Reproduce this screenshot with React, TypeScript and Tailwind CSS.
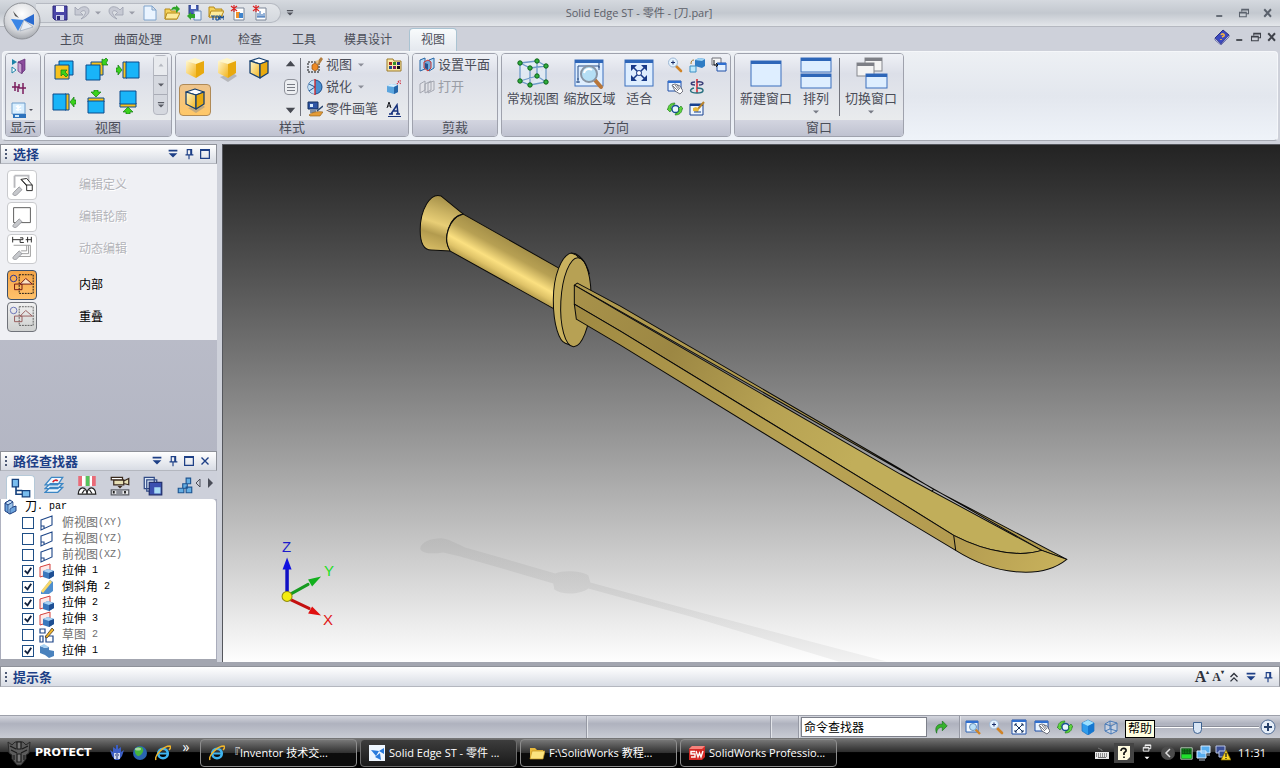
import type { ReactNode } from 'react';

type IconProps = { name: string; size?: number; className?: string };

/** Yellow or outlined shaded cube used by the view style gallery. */
function Cube({ edge, shadow }: { edge?: boolean; shadow?: boolean }) {
  const stroke = edge ? '#17406f' : 'none';
  return (
    <svg width="24" height="28" viewBox="0 0 24 28" className="block">
      <defs>
        <linearGradient id="cubeFront" x1="0" y1="0" x2="1" y2="1">
          <stop offset="0" stopColor="#fff7cf" />
          <stop offset="1" stopColor="#f3b41c" />
        </linearGradient>
      </defs>
      {shadow && <path d="M5 22l8 5 9-6-4-3z" fill="#8d8d8d" opacity=".5" />}
      <g stroke={stroke} strokeWidth="1.3" strokeLinejoin="round">
        <path d="M3 6l9-3 9 3-8 3z" fill={edge ? '#fdfdfd' : '#fff6c8'} />
        <path d="M3 6l10 3v14l-10-5z" fill="url(#cubeFront)" />
        <path d="M13 9l8-3v12l-8 5z" fill="#e8a90e" />
      </g>
    </svg>
  );
}

const blueSquare = { fill: '#19b4f8', stroke: '#0b4a8c' };

/** 24px drawings for the six named views: blue plate, gold back plate, green arrow. */
const viewIcons: ReactNode[] = [
  <>
    <path d="M7 3h14v14H7z" {...blueSquare} />
    <path d="M3 7h14v14H3z" fill="#f8c21c" stroke="#0b4a8c" />
    <path d="M9 12h6l-2 2 3 3-2 2-3-3-2 2z" fill="#3bd21c" stroke="#137a13" strokeWidth=".7" />
  </>,
  <>
    <path d="M7 4h12v13H7z" fill="#f8c21c" stroke="#0b4a8c" />
    <path d="M2 7h14v15H2z" {...blueSquare} />
    <path d="M18 7V1l2 1 2-2 2 2-2 3 2 2z" fill="#3bd21c" stroke="#137a13" strokeWidth=".7" />
  </>,
  <>
    <path d="M7 4h4v16H7z" fill="#f8c21c" stroke="#0b4a8c" />
    <path d="M10 4h13v16H10z" {...blueSquare} />
    <path d="M0 10h2V7l4 5-4 5v-3H0z" fill="#3bd21c" stroke="#137a13" strokeWidth=".7" />
  </>,
  <>
    <path d="M13 4h4v16h-4z" fill="#f8c21c" stroke="#0b4a8c" />
    <path d="M1 4h13v16H1z" {...blueSquare} />
    <path d="M24 10h-2V7l-4 5 4 5v-3h2z" fill="#3bd21c" stroke="#137a13" strokeWidth=".7" />
  </>,
  <>
    <path d="M4 8h16v4H4z" fill="#f8c21c" stroke="#0b4a8c" />
    <path d="M4 11h16v12H4z" {...blueSquare} />
    <path d="M10 0h4v2h3l-5 5-5-5h3z" fill="#3bd21c" stroke="#137a13" strokeWidth=".7" />
  </>,
  <>
    <path d="M4 13h16v4H4z" fill="#f8c21c" stroke="#0b4a8c" />
    <path d="M4 1h16v13H4z" {...blueSquare} />
    <path d="M10 24h4v-2h3l-5-5-5 5h3z" fill="#3bd21c" stroke="#137a13" strokeWidth=".7" />
  </>,
];

const magnifier = (
  <>
    <path d="M9 9l5 5" stroke="#d08428" strokeWidth="2.6" strokeLinecap="round" />
    <circle cx="6" cy="5.5" r="4.5" fill="#e4f3ff" stroke="#9db7d4" />
    <path d="M4 5.5h4M6 3.5v4" stroke="#1b2f6b" strokeWidth="1" />
  </>
);

const fitWindow = (
  <>
    <path d="M1 1h14v14H1z" fill="#f7fbff" stroke="#1f4fa6" />
    <path d="M1 1h14v2H1z" fill="#2f6fd0" />
    <path d="M4 5l8 8M12 5l-8 8M4 7V5h2M12 7V5h-2M4 11v2h2M12 11v2h-2" stroke="#15305f" fill="none" />
  </>
);

const panWindow = (
  <>
    <path d="M1 2h13v10H1z" fill="#e9f3ff" stroke="#1f4fa6" />
    <path d="M1 2h13v2H1z" fill="#2f6fd0" />
    <path d="M5 6l3 6 5 3 3-3-3-5-5-2z" fill="#fff" stroke="#3c3f4d" strokeWidth=".7" />
    <path d="M6 7l5 5M8 6l4 5M10 6l3 4" stroke="#3c3f4d" strokeWidth=".7" />
  </>
);

const rotate = (
  <>
    <circle cx="8.5" cy="8" r="3.6" fill="#e9f6ff" stroke="#174f94" strokeWidth="1.5" />
    <path d="M1 8c0-4 3-6 7-6l-1 2C4 4 4 6 4 8h1l-2 3-3-3zM15 8c0 4-3 6-7 6l1-2c3 0 3-2 3-4h-1l3-3 2 3z" fill="#5fd63f" stroke="#177217" strokeWidth=".6" />
  </>
);

const ieGlobe = (
  <>
    <circle cx="8" cy="8.5" r="4.8" fill="none" stroke="#3fb4ef" strokeWidth="2.6" />
    <path d="M4 8.5h9" stroke="#3fb4ef" strokeWidth="2" />
    <path d="M1 15C-1 11 8 1 15 1c1 1 0 3-1 4" fill="none" stroke="#f0b52a" strokeWidth="1.5" />
  </>
);

/** 16px drawings, keyed by what they stand for. */
const icons: Record<string, ReactNode> = {
  save: (
    <>
      <path d="M1 1h14v14H3l-2-2z" fill="#4a45a8" stroke="#2c2878" />
      <path d="M4 1h8v6H4z" fill="#f3f4fb" />
      <path d="M4 10h8v5H4z" fill="#c9cbe6" />
      <path d="M5 11h3v4H5z" fill="#2c2878" />
    </>
  ),
  undo: <path d="M1 2v8h8L6.5 7.5C9 4 13 6 11 9c-1 2-2 3-4 5 5-2 8-5 8-8C15 1 8 0 4 5z" fill="#c7cad4" stroke="#9da1ae" strokeWidth=".8" />,
  redo: <path d="M15 2v8H7l2.5-2.5C7 4 3 6 5 9c1 2 2 3 4 5-5-2-8-5-8-8C1 1 8 0 12 5z" fill="#c7cad4" stroke="#9da1ae" strokeWidth=".8" />,
  newDoc: <path d="M2 1h8l4 4v10H2zM10 1v4h4" fill="#eaf4ff" stroke="#7fa3cc" />,
  open: (
    <>
      <path d="M1 4h5l1 2h6v8H1z" fill="#f5d25a" stroke="#b58a1b" />
      <path d="M3 8h13l-3 6H1z" fill="#fdeb9c" stroke="#b58a1b" />
      <path d="M7 5c1-3 3-4 5-3V0l4 4-4 4V5c-2-1-3 0-5 0z" fill="#2fa52a" />
    </>
  ),
  saveAs: (
    <>
      <path d="M3 0h9v9H3z" fill="#4a62b8" stroke="#2b3c80" />
      <path d="M5 0h5v4H5z" fill="#eef2ff" />
      <path d="M8 6h7v9H8z" fill="#eaf4ff" stroke="#6b8ab5" />
      <path d="M1 11l4-4v2h4v4H5v2z" fill="#2fa52a" />
    </>
  ),
  tdm: (
    <>
      <path d="M1 2h5l1 2h7v8H1z" fill="#f5d25a" stroke="#b58a1b" />
      <path d="M3 6h13l-3 6H1z" fill="#fdeb9c" stroke="#b58a1b" />
      <path d="M3 11h4M5 11v4M8 15v-4h2l1 2-1 2H8M12 15v-4l2 2 2-2v4" fill="none" stroke="#174f94" strokeWidth="1.2" />
    </>
  ),
  newPart: (
    <>
      <path d="M4 3h10v12H4z" fill="#fff" stroke="#7b8597" />
      <path d="M6 7h4v6H6z" fill="#f0922a" />
      <path d="M9 8h4v5H9z" fill="#4084cc" />
      <path d="M4 0v7M1 1l6 5M7 1L1 6" stroke="#dc2727" strokeWidth="1.2" />
    </>
  ),
  newSheet: (
    <>
      <path d="M4 3h10v12H4z" fill="#fff" stroke="#7b8597" />
      <path d="M6 12V8M8 12V6M10 12V9M12 12V8M5 12h8" stroke="#2d66b0" />
      <path d="M4 0v7M1 1l6 5M7 1L1 6" stroke="#dc2727" strokeWidth="1.2" />
    </>
  ),
  planes: (
    <>
      <path d="M1 1l5 3-5 3z" fill="#1d83a8" />
      <path d="M1 9l4 3-4 3z" fill="#fff" stroke="#1d83a8" />
      <path d="M7 4l4 2v10l-4-3z" fill="#c9a3d2" stroke="#5f2c74" strokeWidth=".7" />
      <path d="M7 4l7-3v11l-3 3V6z" fill="#8d4d9d" stroke="#5f2c74" strokeWidth=".7" />
    </>
  ),
  axes: <path d="M4 2v9M1 7h6v5M12 3v11M8 8h7M8 4v4" fill="none" stroke="#7a1c5c" strokeWidth="1.5" />,
  display: (
    <>
      <path d="M1 1h13v11H1z" fill="#d9efff" stroke="#6f9dcb" />
      <path d="M5 4l5 4M10 4l-5 4M7 3v6" stroke="#fff" strokeWidth="1.5" />
      <path d="M2 12h13v4H2z" fill="#2d73bd" />
      <path d="M4 13h4v2H4z" fill="#cfe9fb" />
    </>
  ),
  paintView: (
    <>
      <path d="M1 5h11v10H1z" fill="none" stroke="#111" strokeDasharray="2 1" />
      <path d="M5 8l3-2 3 2v4l-3 2-3-2z" fill="#ee8a25" stroke="#8e4b0d" strokeWidth=".7" />
      <path d="M9 6l5-6 2 2-4 6z" fill="#b17d3e" />
      <path d="M8 4l4-1-1 4z" fill="#e8c48c" />
    </>
  ),
  sharpen: (
    <>
      <circle cx="8" cy="8" r="7" fill="#4b8fd0" stroke="#1c4f8f" />
      <path d="M8 1a7 7 0 0 0 0 14z" fill="#c5e1f6" />
      <path d="M2 5l6 3-6 4" stroke="#1c4f8f" fill="none" />
      <path d="M8 0v16" stroke="#d42020" strokeWidth="1.3" />
    </>
  ),
  painter: (
    <>
      <path d="M1 1h10v7H1z" fill="#2e55a5" stroke="#15305f" />
      <path d="M3 3h3v3H3z" fill="#d8ecff" />
      <path d="M3 8h6v4H3z" fill="#7d8fa7" />
      <path d="M2 14c3-3 8-4 14-3l-3 4H3z" fill="#e39b36" stroke="#8a5a16" strokeWidth=".6" />
      <path d="M10 10l6-5" stroke="#28456f" strokeWidth="1.5" />
    </>
  ),
  palette: (
    <>
      <path d="M1 2h6l1 2h7v10H1z" fill="#fbe8a8" stroke="#9b7a28" />
      <path d="M3 5h3v3H3z" fill="#a3271f" />
      <path d="M7 5h3v3H7z" fill="#2f8f2a" />
      <path d="M11 5h3v3h-3z" fill="#23277f" />
      <path d="M3 9h3v3H3z" fill="#1c4f8f" />
      <path d="M7 9h3v3H7z" fill="#7a1c5c" />
      <path d="M11 9h3v3h-3z" fill="#111" />
    </>
  ),
  cubeSpark: (
    <>
      <path d="M1 7l4-2 7 1v7l-4 2-7-2z" fill="#5aa5de" />
      <path d="M1 7l4-2 7 1-4 2z" fill="#d9f0ff" />
      <path d="M8 8l4-2v7l-4 2z" fill="#2666a8" />
      <path d="M11 5l4-4M12 2l1 1M14 4l1 1" stroke="#cf2b3d" strokeDasharray="1 1" strokeWidth="1.3" />
    </>
  ),
  fontStyle: (
    <>
      <path d="M1 7l2-6 2 6M2 5h3" fill="none" stroke="#15181f" />
      <path d="M5 13l6-9 1 9M7 10h5M3 13h4M10 13h4" fill="none" stroke="#17327c" strokeWidth="1.5" />
      <path d="M2 15.5h13" stroke="#17327c" />
    </>
  ),
  clipPlane: (
    <>
      <path d="M1 3l5-2v11l-5 2zM10 3l5-2v10l-5 3z" fill="#bcdcf5" stroke="#2464a4" />
      <path d="M5 5l4-2 3 2v6l-3 3-4-3z" fill="#6fa8d8" stroke="#cf3430" />
      <path d="M6 6l3 1v6l-3-2z" fill="#24528f" />
    </>
  ),
  clipOff: <path d="M1 5l5-3v9l-5 3zM6 5l6-3v9l-6 3zM9 4l6-2v9l-6 3z" fill="#e2e3e8" stroke="#a3a6b0" />,
  magnifier,
  fitWindow,
  panWindow,
  rotate,
  zoomArea: (
    <>
      <path d="M1 2h12v11H1z" fill="#f3f9ff" stroke="#2e65b4" />
      <path d="M1 2h12v2H1z" fill="#2f6fd0" />
      <path d="M10 10l5 5" stroke="#d08428" strokeWidth="2.4" />
      <circle cx="8" cy="8" r="3.5" fill="#b9e0f8" stroke="#6f93b7" />
    </>
  ),
  viewFace: (
    <>
      <path d="M6 3l4-2 6 1v7l-3 2-7-2z" fill="#2f7cc4" />
      <path d="M6 3l4-2 6 1-3 2z" fill="#9fd3f4" />
      <path d="M1 9h6v6H1z" fill="#bfe9fb" stroke="#3b8fc4" />
      <path d="M2 7c0-3 1-4 3-4" fill="none" stroke="#a37a2f" />
    </>
  ),
  spin: (
    <>
      <path d="M8 0v14" stroke="#d4202a" strokeWidth="1.5" />
      <path d="M8 3c7-1 8 3 2 3M6 6C1 6 1 3 6 3" fill="none" stroke="#3a3f78" strokeWidth="1.5" />
      <path d="M8 9c8 0 8 5 0 5s-8-4-3-5" fill="none" stroke="#28707f" strokeWidth="1.5" />
    </>
  ),
  prevView: (
    <>
      <path d="M1 1h9v7H1z" fill="#f5f5f5" stroke="#6f7078" />
      <path d="M6 6h9v8H6z" fill="#e4f1ff" stroke="#1f4fa6" />
      <path d="M6 6h9v2H6z" fill="#2f6fd0" />
      <path d="M3 3v5h4M5 6l2 2-2 2" fill="none" stroke="#15181f" />
    </>
  ),
  sketchView: (
    <>
      <path d="M1 3h13v11H1z" fill="#eef6ff" stroke="#17408f" />
      <path d="M1 3h13v2H1z" fill="#17408f" />
      <path d="M8 9l7-8" fill="none" stroke="#b8832c" strokeWidth="2" />
      <path d="M4 7l3-1 3 2-1 3-5-1z" fill="#e8b93c" />
      <path d="M5 11h7" stroke="#17408f" />
    </>
  ),
  greenArrow: <path d="M2 15c-3-7 1-12 7-11V0l6 6-6 6V8c-3-1-7 2-7 7z" fill="#35b22c" stroke="#15701a" strokeWidth=".8" />,
  shaded: (
    <>
      <path d="M2 4l6-3 6 3v8l-6 4-6-4z" fill="#2f9cec" stroke="#1c70bd" strokeWidth=".7" />
      <path d="M2 4l6-3 6 3-6 3z" fill="#9be0ff" />
      <path d="M8 7l6-3v8l-6 4z" fill="#1576cf" />
    </>
  ),
  wireframe: <path d="M2 5l5-3 7 2v8l-6 3-6-3zM2 5l6 2 6-3M8 7v8M7 2v8l-5 2M7 10l7 2" fill="#d7e8fa" fillOpacity=".5" stroke="#3f74b4" strokeWidth=".9" />,
  book: (
    <>
      <path d="M1 9l8-8 6 5-8 9z" fill="#3c49bf" stroke="#2a2f86" />
      <path d="M1 9v2l6 5 8-8V6l-8 9z" fill="#d7daf2" stroke="#2a2f86" strokeWidth=".6" />
      <path d="M7 6c1-2 4-1 3 1L8 8M7 10v1" fill="none" stroke="#f5b443" strokeWidth="1.6" />
    </>
  ),
  // path finder tabs
  tree: (
    <>
      <path d="M1 1h5v6H1zM9 10h6v5H9z" fill="#79bdee" stroke="#16427e" />
      <path d="M4 7v6h5M4 10h5" fill="none" stroke="#16427e" strokeWidth="1.3" />
    </>
  ),
  layers: (
    <>
      <path d="M1 13l4-4h10l-4 4zM1 10l4-4h10l-4 4zM1 7l5-6h9l-4 6z" fill="#eef7ff" stroke="#3c86c4" />
      <path d="M7 5c1-2 3-2 4-1" fill="none" stroke="#d4202a" strokeWidth="1.3" />
    </>
  ),
  sensors: (
    <>
      <path d="M1 0h14v8H1z" fill="#e96b78" />
      <path d="M4 0h3v8H4zM10 0h2v8h-2z" fill="#fff" />
      <path d="M7 0h3v8H7z" fill="#55c45d" />
      <path d="M1 14.5a3.500 5 0 0 1 7 0zM8 14.5a3.500 5 0 0 1 7 0z" fill="#fff" stroke="#222" />
      <path d="M4 14l2-3M12 14l-2-3" stroke="#222" />
    </>
  ),
  playback: (
    <>
      <path d="M3 3h8v4H3zM11 4l4-2v5l-4-1" fill="#e6dfb5" stroke="#3a2a1e" />
      <path d="M1 1h9v2H1z" fill="#fff" stroke="#3a2a1e" />
      <path d="M1 11h14v4H1z" fill="#e7e8ea" stroke="#5c5f66" />
      <path d="M5 11h5v4H5z" fill="#8d9099" />
      <path d="M3 12v2M12 12v2" stroke="#222" strokeWidth="1.5" />
      <path d="M6 8l2 2 2-2" fill="#3a2a1e" />
    </>
  ),
  library: (
    <>
      <path d="M1 1h8v9H1zM3 3h8v9H3z" fill="#dbe7f5" stroke="#314a86" />
      <path d="M5 5h10v10H5z" fill="#3b51b0" stroke="#22306e" />
      <path d="M9 9h5v5H9z" fill="#a8dcf5" />
    </>
  ),
  family: <path d="M9 1h4v5H9zM6 6h4v4H6zM2 10h5v4H2zM9 9h5v5H9z" fill="#63aee4" stroke="#1c5390" />,
  // tree rows
  part: (
    <>
      <path d="M2 4l5-3v8l6-2v5l-6 3-5-3z" fill="#6ca3dc" stroke="#1e3f80" />
      <path d="M2 4l5-3 3 2-5 3z" fill="#c4def6" stroke="#1e3f80" />
      <path d="M5 6l5-3v5l-3 2v5l-2-1z" fill="#9cc4ea" stroke="#1e3f80" strokeWidth=".7" />
    </>
  ),
  refPlane: <path d="M2 5l11-4v9l-11 5zM2 11h3v3" fill="none" stroke="#1c4587" strokeWidth="1.1" />,
  extrude: (
    <>
      <path d="M1 4l10-3v10L1 14z" fill="#fde9e8" stroke="#d5413c" />
      <path d="M4 8l5-2 6 2v5l-5 3-6-2z" fill="#3a78bd" />
      <path d="M4 8l5-2 6 2-5 2z" fill="#a9d2f3" />
      <path d="M10 10l5-2v5l-5 3z" fill="#1f4f93" />
    </>
  ),
  chamfer: (
    <>
      <path d="M2 13L11 1l3 2v9l-4 3H2z" fill="#4f8fce" />
      <path d="M2 12L11 1l2 2-9 11z" fill="#f7d76a" />
    </>
  ),
  sketch: (
    <>
      <path d="M1 2h5v4H1zM1 9h3v6H1zM7 9h7v6H7z" fill="none" stroke="#1c4587" strokeWidth="1.2" />
      <path d="M6 10l7-9 2 2-7 8z" fill="#f0b52a" stroke="#3a2a1e" strokeWidth=".7" />
    </>
  ),
  base: (
    <>
      <path d="M1 3l5 2v7l-5-2zM6 5l4-1v3l5 1v5l-5 2-4-3z" fill="#4a82bd" />
      <path d="M1 3l4-2 5 3-4 1z" fill="#a9d2f3" />
    </>
  ),
  // taskbar
  ieGlobe,
  robot: (
    <>
      <path d="M1 5l2 6 3 4h4l3-4 2-6-3 2V2L9 4V0H7v4L4 2v5z" fill="#3c5fc4" />
      <path d="M5 8h6v6H5z" fill="#cfd9f2" />
      <path d="M6 10h1M9 10h1M8 8v6" stroke="#23336f" />
    </>
  ),
  globe: (
    <>
      <circle cx="8" cy="8" r="7" fill="#2a64b0" />
      <path d="M3 4c3-3 7-3 8 0s-2 6-4 7-5-3-4-7z" fill="#46b43c" />
      <ellipse cx="6" cy="4" rx="3" ry="1.5" fill="#fff" opacity=".5" />
    </>
  ),
  solidEdge: (
    <>
      <path d="M0 0h16v16H0z" fill="#eef6ff" />
      <path d="M2 5l8 1-3 5zM10 6l5-3v6zM6 12l5-4 1 7z" fill="#2a7bdc" />
    </>
  ),
  folder: (
    <>
      <path d="M1 3h5l2 2h6v9H1z" fill="#e9b93b" />
      <path d="M3 6h13l-2 8H1z" fill="#fbe37e" stroke="#c4921e" strokeWidth=".7" />
    </>
  ),
  solidWorks: (
    <>
      <path d="M0 4l3-3h13v11l-3 3H0z" fill="#d32a26" />
      <path d="M0 4l3-3h13l-3 3z" fill="#f5837c" />
      <path d="M6 6.500H2v2.500h4v3H2M7 6l2 6 1.500-4 1.500 4L14 6" fill="none" stroke="#fff" strokeWidth="1.4" />
    </>
  ),
  keyboard: (
    <>
      <path d="M1 7h14v7H1z" fill="#e8e8e8" />
      <path d="M2 9h12M2 11h12" stroke="#333" strokeDasharray="1 1" />
      <path d="M4 12.5h8" stroke="#777" />
      <path d="M8 6V5l-4-2" stroke="#777" fill="none" />
    </>
  ),
  helpPage: (
    <>
      <path d="M2 1h12v11l-3 3H2z" fill="#fffbe0" />
      <path d="M5 6c0-4 6-3 5 0L8 8v2M8 11.5v1.5" fill="none" stroke="#111" strokeWidth="1.7" />
    </>
  ),
  cpu: (
    <>
      <path d="M1 1h14v14H1z" fill="#0b4f12" stroke="#d5e8d5" />
      <path d="M2 9h12v5H2z" fill="#21e02d" />
      <path d="M2 3h12M2 5h12M2 7h12" stroke="#17a520" strokeDasharray="1 1" />
    </>
  ),
  network: (
    <>
      <path d="M5 1h9v7H5zM1 6h9v7H1z" fill="#58aef0" stroke="#d7ebff" />
      <path d="M3 15h6M11 10h3" stroke="#b7c5d6" />
    </>
  ),
  networkWarn: (
    <>
      <path d="M1 1h9v7H1z" fill="#3b4f96" stroke="#b9c4e3" />
      <path d="M4 6h7v6H4z" fill="#33488c" stroke="#b9c4e3" />
      <path d="M11 5l5 10H6z" fill="#fbd622" stroke="#7c6400" strokeWidth=".7" />
      <path d="M11 8v4M11 13v1" stroke="#222" strokeWidth="1.3" />
    </>
  ),
  // window decorations
  minimize: <path d="M3 12h8" stroke="currentColor" strokeWidth="2.4" />,
  restore: <path d="M5 6V3h9v6h-3M2 7h9v6H2zM2 8h9M5 4h9" fill="none" stroke="currentColor" strokeWidth="1.4" />,
  close: <path d="M3 3l9 10M12 3L3 13" stroke="currentColor" strokeWidth="2.6" />,
  closeThin: <path d="M4 4l8 8M12 4l-8 8" stroke="currentColor" strokeWidth="1.6" />,
  menu: <path d="M3 3h10v2H3zM3 7h10l-5 5z" fill="currentColor" />,
  pin: <path d="M6 3h5v6H6zM4 9h9M8 9v5M10 3v6" fill="none" stroke="currentColor" strokeWidth="1.3" />,
  maximize: <path d="M3 3h10v10H3zM3 4h10" fill="none" stroke="currentColor" strokeWidth="1.4" />,
  chevrons: <path d="M4 8l4-4 4 4M4 13l4-4 4 4" fill="none" stroke="currentColor" strokeWidth="1.6" />,
  down: <path d="M4 6h8l-4 4z" fill="currentColor" />,
  up: <path d="M3 11h10L8 5z" fill="currentColor" />,
};

function Icon({ name, size = 16, className }: IconProps) {
  return (
    <svg width={size} height={size} viewBox="0 0 16 16" aria-hidden="true" className={`block shrink-0 ${className ?? ''}`}>
      {icons[name]}
    </svg>
  );
}

function IconButton({ name, label, size, className }: IconProps & { label: string }) {
  return (
    <button type="button" aria-label={label} className={`flex items-center justify-center ${className ?? ''}`}>
      <Icon name={name} size={size} />
    </button>
  );
}

function TitleBar() {
  return (
    <header className="grid h-[26px] grid-cols-[1fr_auto_1fr] items-center bg-linear-to-b from-[#d5d9df] via-[#c3c8cf] to-[#e3e6ea] pr-[2px]">
      <div className="flex items-center">
        <div className="ml-9 flex h-5 w-[245px] items-center rounded-r-full border border-l-0 border-[#b6bac2] bg-linear-to-b from-[#e3e6ea] to-[#d4d8de] pl-4 text-[#9a9da8]">
          <IconButton name="save" label="保存" className="w-4" />
          <IconButton name="undo" label="撤销" className="ml-1 w-5" />
          <Icon name="down" size={12} />
          <IconButton name="redo" label="重做" className="ml-[2px] w-5" />
          <Icon name="down" size={12} />
          <div className="ml-1 flex gap-[6px]">
            <IconButton name="newDoc" label="新建" />
            <IconButton name="open" label="打开" />
            <IconButton name="saveAs" label="另存为" />
            <IconButton name="tdm" label="TDM" />
            <IconButton name="newPart" label="新建零件" />
            <IconButton name="newSheet" label="新建钣金" />
          </div>
        </div>
        <IconButton name="menu" label="自定义" size={10} className="ml-1 text-[#50535c]" />
      </div>
      <h1 className="text-[11px] text-[#5c6069]">Solid Edge ST - 零件 - [刀.par]</h1>
      <div className="flex justify-end gap-3 text-[#5b626d]">
        <IconButton name="minimize" label="最小化" size={12} />
        <IconButton name="restore" label="还原" size={12} />
        <IconButton name="close" label="关闭" size={12} className="mr-1" />
      </div>
    </header>
  );
}

function RibbonTabs() {
  const tabs = [
    { label: '主页', width: 'w-12' },
    { label: '曲面处理', width: 'w-[84px]' },
    { label: 'PMI', width: 'w-[42px]' },
    { label: '检查', width: 'w-[56px]' },
    { label: '工具', width: 'w-[52px]' },
    { label: '模具设计', width: 'w-[76px]' },
  ];
  return (
    <nav className="flex h-[25px] items-end border-t border-[#b5b8c0] bg-[#ced1da] pl-12 text-xs text-[#4a4d58]">
      {tabs.map((tab) => (
        <a key={tab.label} href="#" className={`${tab.width} pb-[3px] text-center`}>
          {tab.label}
        </a>
      ))}
      <a href="#" className="ml-[3px] h-[23px] w-12 rounded-t border border-b-0 border-[#a9c3d2] bg-linear-to-b from-[#f8fbfc] to-[#e4e8ee] pt-[3px] text-center">
        视图
      </a>
      <div className="ml-auto flex items-center gap-1 pr-[2px] pb-[6px] text-[#3f424a]">
        <IconButton name="book" label="帮助主题" />
        <IconButton name="minimize" label="最小化文档" size={12} />
        <IconButton name="restore" label="还原文档" size={12} />
        <IconButton name="close" label="关闭文档" size={12} />
      </div>
    </nav>
  );
}

function RibbonGroup({ title, className, children }: { title: string; className: string; children: ReactNode }) {
  return (
    <section className={`flex shrink-0 flex-col overflow-hidden rounded border border-[#9fa2ad] bg-linear-to-b from-[#f1f3f7] via-[#e1e4ea] to-[#eaebef] ${className}`}>
      <div className="flex h-[67px] bg-linear-to-b from-[#eff1f6] via-[#dcdfe8] via-30% to-[#e9ebed]">{children}</div>
      <h2 className="h-4 bg-linear-to-b from-[#d3d5e0] to-[#bfc2d0] text-center leading-[14px]">{title}</h2>
    </section>
  );
}

function SmallCommand({ icon, label, menu, disabled }: { icon: string; label: string; menu?: boolean; disabled?: boolean }) {
  return (
    <button type="button" disabled={disabled} className={`flex h-[22px] items-center gap-[3px] ${disabled ? 'text-[#9a9da6]' : ''}`}>
      <Icon name={icon} />
      <span>{label}</span>
      {menu && <Icon name="down" size={12} className="text-[#8b8e98]" />}
    </button>
  );
}

function BigCommand({ label, className, menu, children }: { label: string; className: string; menu?: boolean; children: ReactNode }) {
  return (
    <button type="button" className={`flex flex-col items-center whitespace-nowrap ${className}`}>
      <svg width="36" height="36" viewBox="0 0 36 36" className="block">
        {children}
      </svg>
      <span className="leading-4">{label}</span>
      {menu && <Icon name="down" size={12} className="text-[#777a85]" />}
    </button>
  );
}

/** Window glyph with a blue caption strip, drawn on a 36px canvas. */
function Pane({ x, y, w, h, gray }: { x: number; y: number; w: number; h: number; gray?: boolean }) {
  return (
    <>
      <rect x={x} y={y} width={w} height={h} fill={gray ? '#f4f4f4' : '#deeeff'} stroke={gray ? '#85878d' : '#3a6fbd'} />
      <rect x={x} y={y} width={w} height="3" fill={gray ? '#7d7f86' : '#2e66b8'} />
    </>
  );
}

function ScrollArrows() {
  return (
    <div className="flex w-[15px] flex-col items-center justify-between py-[2px] text-[#474a52]">
      <IconButton name="up" label="向上" size={15} />
      <span className="flex h-4 w-[14px] flex-col justify-center gap-[2px] rounded-sm border border-[#8f929b] bg-[#eceef1] px-[2px]">
        <i className="h-px bg-[#777a83]" />
        <i className="h-px bg-[#777a83]" />
        <i className="h-px bg-[#777a83]" />
      </span>
      <IconButton name="up" label="向下" size={15} className="rotate-180" />
    </div>
  );
}

function Ribbon() {
  const viewNames = ['前视图', '后视图', '左视图', '右视图', '俯视图', '仰视图'];
  return (
    <div className="mx-[2px] flex h-[90px] gap-[3px] rounded border border-[#f5f7fa] border-b-[#a6a9b2] bg-linear-to-b from-[#edf0f4] via-[#e3e7ee] to-[#eff3f9] px-[2px] pt-px pb-[3px] text-[13px] text-[#4a4d58]">
      <RibbonGroup title="显示" className="w-9">
        <div className="flex flex-col items-start gap-[6px] pt-1 pl-[5px]">
          <IconButton name="planes" label="参考平面" />
          <IconButton name="axes" label="坐标系" />
          <button type="button" aria-label="构造显示" className="flex items-center">
            <Icon name="display" />
            <Icon name="down" size={8} />
          </button>
        </div>
      </RibbonGroup>

      <RibbonGroup title="视图" className="w-32">
        <div className="grid grid-cols-[32px_32px_32px] grid-rows-[32px_32px] pl-[3px]">
          {viewIcons.map((drawing, i) => (
            <button key={viewNames[i]} type="button" aria-label={viewNames[i]} className="flex items-center justify-center">
              <svg width="24" height="24" viewBox="0 0 24 24">
                {drawing}
              </svg>
            </button>
          ))}
        </div>
        <div className="mt-px ml-auto mr-[3px] flex h-[60px] w-[15px] flex-col rounded-sm border border-[#b4b7c0] bg-[#d5d8df] text-[#5a5d66]">
          <IconButton name="up" label="上一行" size={8} className="flex-1 bg-[#e8eaee] text-[#b6b9c1]" />
          <IconButton name="down" label="下一行" size={12} className="flex-1 border-y border-[#a9acb6]" />
          <IconButton name="menu" label="更多" size={10} className="flex-1" />
        </div>
      </RibbonGroup>

      <RibbonGroup title="样式" className="w-[234px]">
        <div className="grid grid-cols-[32px_32px_32px] grid-rows-[30px_32px] pl-[3px]">
          <button type="button" aria-label="着色" className="flex items-center justify-center"><Cube /></button>
          <button type="button" aria-label="带阴影着色" className="flex items-center justify-center"><Cube shadow /></button>
          <button type="button" aria-label="带边着色" className="flex items-center justify-center"><Cube edge /></button>
          <button type="button" aria-label="带边和阴影着色" className="flex items-center justify-center rounded-sm border border-[#b08a56] bg-linear-to-b from-[#edc48d] to-[#ffc766]">
            <Cube edge shadow />
          </button>
        </div>
        <div className="ml-2 flex">
          <ScrollArrows />
          <div className="my-1 ml-[2px] w-px bg-[#71747e]" />
        </div>
        <div className="ml-[6px] w-[76px]">
          <SmallCommand icon="paintView" label="视图" menu />
          <SmallCommand icon="sharpen" label="锐化" menu />
          <SmallCommand icon="painter" label="零件画笔" />
        </div>
        <div className="ml-[3px] flex flex-col">
          <IconButton name="palette" label="颜色管理器" className="h-[22px]" />
          <IconButton name="cubeSpark" label="渲染" className="h-[22px]" />
          <IconButton name="fontStyle" label="文字样式" className="h-[22px]" />
        </div>
      </RibbonGroup>

      <RibbonGroup title="剪裁" className="w-[86px]">
        <div className="pl-[6px]">
          <SmallCommand icon="clipPlane" label="设置平面" />
          <SmallCommand icon="clipOff" label="打开" disabled />
        </div>
      </RibbonGroup>

      <RibbonGroup title="方向" className="w-[230px]">
        <BigCommand label="常规视图" className="ml-1 w-[54px]">
          <path d="M5 9l10 5v17L5 27zM5 9l17-2 9 5-16 2M15 31l16-3V12M22 7v15l9 6M22 22L5 27" fill="#e2f1fb" fillOpacity=".5" stroke="#6f9bc9" strokeWidth="1.3" />
          {[[5, 9], [22, 7], [31, 12], [15, 14], [5, 27], [15, 31], [31, 28], [22, 22]].map(([cx, cy]) => (
            <circle key={`${cx}-${cy}`} cx={cx} cy={cy} r="2.2" fill="#2fae3c" stroke="#0e6418" />
          ))}
        </BigCommand>
        <BigCommand label="缩放区域" className="ml-[3px] w-[54px]">
          <Pane x={4} y={6} w={28} h={26} />
          <path d="M7 26V12h21v4M7 24v5M5 28h4M28 9v5" fill="none" stroke="#284c85" />
          <path d="M23 25l7 8" stroke="#b8763a" strokeWidth="4" strokeLinecap="round" />
          <circle cx="18" cy="20" r="8" fill="#b5dff5" stroke="#8894a3" strokeWidth="2" />
          <path d="M13 19c1-4 5-5 8-3" fill="none" stroke="#fff" strokeWidth="2" />
        </BigCommand>
        <BigCommand label="适合" className="w-[46px]">
          <Pane x={4} y={6} w={28} h={26} />
          <path d="M12 13l12 12M24 13L12 25" fill="none" stroke="#183a88" strokeWidth="1.5" />
          <path d="M10 11h6l-6 6zM26 11h-6l6 6zM10 27h6l-6-6zM26 27h-6l6-6z" fill="#183a88" />
          <circle cx="18" cy="19" r="2.5" fill="#fff" stroke="#183a88" />
        </BigCommand>
        <div className="ml-[2px] grid grid-cols-[22px_22px_22px] grid-rows-[22px_22px_22px]">
          <IconButton name="magnifier" label="缩放" />
          <IconButton name="viewFace" label="观察面" />
          <IconButton name="prevView" label="上一视图" />
          <IconButton name="panWindow" label="平移" />
          <IconButton name="spin" label="自旋" />
          <span />
          <IconButton name="rotate" label="旋转" />
          <IconButton name="sketchView" label="草图视图" />
        </div>
      </RibbonGroup>

      <RibbonGroup title="窗口" className="w-[170px]">
        <BigCommand label="新建窗口" className="ml-1 w-[54px]">
          <Pane x={3} y={7} w={30} h={25} />
        </BigCommand>
        <BigCommand label="排列" className="w-[46px]" menu>
          <Pane x={3} y={4} w={30} h={14} />
          <Pane x={3} y={20} w={30} h={14} />
        </BigCommand>
        <div className="my-1 w-px bg-[#71747e]" />
        <BigCommand label="切换窗口" className="ml-1 w-[54px]" menu>
          <Pane x={12} y={4} w={17} h={13} gray />
          <Pane x={4} y={9} w={17} h={13} gray />
          <Pane x={13} y={20} w={21} h={14} />
        </BigCommand>
      </RibbonGroup>
    </div>
  );
}

function Grip() {
  return (
    <span className="flex flex-col gap-[2px]">
      <i className="size-[2px] bg-[#4d5a75]" />
      <i className="size-[2px] bg-[#4d5a75]" />
      <i className="size-[2px] bg-[#4d5a75]" />
    </span>
  );
}

function PanelHeader({ title, closable }: { title: string; closable?: boolean }) {
  return (
    <div className="flex h-5 items-center border border-[#8e9199] border-b-[#b4b7bf] bg-linear-to-b from-white to-[#d8dce4] pl-1 text-[#1d3f86]">
      <Grip />
      <h2 className="ml-[6px] text-[13px] font-bold leading-4">{title}</h2>
      <div className="mr-1 ml-auto flex gap-[2px]">
        <IconButton name="menu" label="选项" size={14} />
        <IconButton name="pin" label="固定" size={14} />
        <IconButton name="maximize" label="最大化" size={14} />
        {closable && <IconButton name="closeThin" label="关闭面板" size={14} />}
      </div>
    </div>
  );
}

const pencil = <path d="M6 23l6-6 3 3-6 6c-3 1-5-1-3-3z" fill="#c6c8cc" stroke="#8a8c91" strokeWidth=".8" />;

function SelectDrawing({ faded }: { faded?: boolean }) {
  return (
    <g fill="none" opacity={faded ? 0.65 : 1}>
      <path d="M12 4h15v20H12z" stroke="#111" strokeDasharray="2 1" />
      <circle cx="6" cy="8" r="3.5" stroke="#22329b" />
      <path d="M7 14h8v6H7z" stroke="#6d1010" />
      <path d="M13 14l6-6 7 6z" fill={faded ? 'none' : '#fbe3c4'} stroke="#6d1010" />
    </g>
  );
}

function SelectPanel() {
  const rows = [
    { label: '编辑定义', drawing: <><path d="M7 5h15v10M7 5v13" fill="none" stroke="#b8b9bd" strokeWidth="2" /><path d="M14 9l6-1 6 7v6h-6v-6zM14 9l6 7M20 15h6" fill="#fff" stroke="#222" />{pencil}</> },
    { label: '编辑轮廓', drawing: <><path d="M6 5h18v16H6z" fill="#fff" stroke="#555" />{pencil}</> },
    { label: '动态编辑', drawing: <><path d="M5 5h8M19 5h6M5 2v6M21 2v6M25 2v6M13 3h3v2h-3v3h4" fill="none" stroke="#222" /><path d="M6 11h18v12H10M22 11v9H12M20 11v6h-6" fill="none" stroke="#999" />{pencil}</> },
  ];
  const toggles = [
    { label: '内部', pressed: true },
    { label: '重叠', pressed: false },
  ];
  return (
    <section>
      <PanelHeader title="选择" />
      <div className="flex h-[176px] flex-col gap-[2px] bg-[#eff0f4] pt-[6px] pl-[7px] text-xs">
        {rows.map((row) => (
          <button key={row.label} type="button" disabled className="flex items-center text-[#b3b4b9] [text-shadow:1px_1px_0_white]">
            <svg width="30" height="30" viewBox="0 0 30 30" className="rounded-sm border border-[#c9cacd] bg-white">
              {row.drawing}
            </svg>
            <span className="ml-[42px]">{row.label}</span>
          </button>
        ))}
        <div className="mt-1 flex flex-col gap-[2px]">
          {toggles.map((toggle) => (
            <button key={toggle.label} type="button" aria-pressed={toggle.pressed} className="flex items-center text-black">
              <svg
                width="30"
                height="30"
                viewBox="0 0 30 30"
                className={`rounded-sm border ${toggle.pressed ? 'border-[#3c4f6a] bg-linear-to-b from-[#f5a547] to-[#ffc26b]' : 'border-[#70737a] bg-linear-to-b from-[#f0f0f0] to-[#cfd1d0]'}`}
              >
                <SelectDrawing faded={!toggle.pressed} />
              </svg>
              <span className="ml-[42px]">{toggle.label}</span>
            </button>
          ))}
        </div>
      </div>
    </section>
  );
}

interface Feature {
  name: string;
  suffix: string;
  icon: string;
  shown: boolean;
}

const features: Feature[] = [
  { name: '俯视图', suffix: '(XY)', icon: 'refPlane', shown: false },
  { name: '右视图', suffix: '(YZ)', icon: 'refPlane', shown: false },
  { name: '前视图', suffix: '(XZ)', icon: 'refPlane', shown: false },
  { name: '拉伸', suffix: ' 1', icon: 'extrude', shown: true },
  { name: '倒斜角', suffix: ' 2', icon: 'chamfer', shown: true },
  { name: '拉伸', suffix: ' 2', icon: 'extrude', shown: true },
  { name: '拉伸', suffix: ' 3', icon: 'extrude', shown: true },
  { name: '草图', suffix: ' 2', icon: 'sketch', shown: false },
  { name: '拉伸', suffix: ' 1', icon: 'base', shown: true },
];

const mono = "font-['Liberation_Mono',monospace] text-[10px] whitespace-pre";

function PathFinder() {
  return (
    <section className="border-b-3 border-[#a3a6b0]">
      <PanelHeader title="路径查找器" closable />
      <div className="flex h-7 items-end bg-[#cdd0da] pl-[6px]">
        <button type="button" aria-label="特征树" className="flex h-6 w-[29px] items-center justify-center rounded-t border border-b-0 border-[#b5c9d8] bg-white">
          <Icon name="tree" size={20} />
        </button>
        <div className="flex h-[26px] items-center gap-[13px] pl-[9px]">
          <IconButton name="layers" label="图层" size={20} />
          <IconButton name="sensors" label="传感器" size={20} />
          <IconButton name="playback" label="特征回放" size={20} />
          <IconButton name="library" label="特征库" size={20} />
          <IconButton name="family" label="零件族" size={18} />
        </div>
        <button type="button" aria-label="向左" className="mb-[10px] text-[#4a4d58]">
          <svg width="8" height="12" viewBox="0 0 8 12"><path d="M6 2L2 6l4 4z" fill="none" stroke="currentColor" /></svg>
        </button>
        <button type="button" aria-label="向右" className="mb-[10px] ml-1 text-[#4a4d58]">
          <svg width="8" height="12" viewBox="0 0 8 12"><path d="M2 1l5 5-5 5z" fill="currentColor" /></svg>
        </button>
      </div>
      <div className="mx-px rounded-tr bg-white text-xs leading-4 text-black">
        <div className="flex h-4 items-center pl-[2px]">
          <Icon name="part" />
          <span className="ml-[6px]">刀</span>
          <span className={mono}>. par</span>
        </div>
        <ul>
          {features.map((feature, i) => (
            <li key={i}>
              <label className={`flex h-4 items-center pl-[21px] ${feature.shown ? '' : 'text-[#6f6f6f]'}`}>
                <span className="grid">
                  <input type="checkbox" defaultChecked={feature.shown} className="peer col-start-1 row-start-1 size-3 appearance-none border border-[#1f4f86] bg-white" />
                  <svg width="12" height="12" viewBox="0 0 13 13" className="invisible col-start-1 row-start-1 peer-checked:visible">
                    <path d="M3 6l3 3 4-6" fill="none" stroke="#10203c" strokeWidth="2" />
                  </svg>
                </span>
                <Icon name={feature.icon} className="ml-[5px]" />
                <span className="ml-[7px]">{feature.name}</span>
                <span className={mono}>{feature.suffix}</span>
              </label>
            </li>
          ))}
        </ul>
      </div>
    </section>
  );
}

/** Model view: a sword, its floor shadow and the axis triad. */
function Viewport() {
  return (
    <main className="ml-[5px] flex flex-1 border-t border-l border-[#55575d] bg-linear-to-b from-[#232323] to-[#fefefe]">
      <svg viewBox="223 145 1056 516" preserveAspectRatio="xMinYMin meet" className="h-full w-full" aria-label="刀">
        <defs>
          <linearGradient id="handle" gradientUnits="userSpaceOnUse" x1="512" y1="241" x2="492" y2="277">
            <stop offset="0" stopColor="#a48f48" />
            <stop offset=".3" stopColor="#b7a053" />
            <stop offset=".62" stopColor="#fbe080" />
            <stop offset=".8" stopColor="#dfc368" />
            <stop offset="1" stopColor="#a58e42" />
          </linearGradient>
          <linearGradient id="pommel" gradientUnits="userSpaceOnUse" x1="446" y1="196" x2="428" y2="250">
            <stop offset="0" stopColor="#a08b45" />
            <stop offset=".3" stopColor="#cdb564" />
            <stop offset=".5" stopColor="#e8ce76" />
            <stop offset=".7" stopColor="#b39b4e" />
            <stop offset="1" stopColor="#d9be66" />
          </linearGradient>
          <linearGradient id="blade" gradientUnits="userSpaceOnUse" x1="574" y1="290" x2="860" y2="450">
            <stop offset="0" stopColor="#a8924a" />
            <stop offset=".35" stopColor="#9c8743" />
            <stop offset=".7" stopColor="#b7a253" />
            <stop offset="1" stopColor="#c1ae5a" />
          </linearGradient>
          <linearGradient id="edge" gradientUnits="userSpaceOnUse" x1="574" y1="310" x2="1066" y2="560">
            <stop offset="0" stopColor="#a08a42" />
            <stop offset=".5" stopColor="#b9a354" />
            <stop offset=".8" stopColor="#b39b50" />
            <stop offset="1" stopColor="#c8b25c" />
          </linearGradient>
          <linearGradient id="shadow" gradientUnits="userSpaceOnUse" x1="0" y1="538" x2="0" y2="661">
            <stop offset="0" stopColor="#a9a9a9" />
            <stop offset=".5" stopColor="#bcbcbc" />
            <stop offset="1" stopColor="#dcdcdc" />
          </linearGradient>
        </defs>

        <path
          d="M420 548C421 542 430 538 441 538C450 539 455 543 465 547L555 573C562 570 580 570 588 575L590 582L700 612L886 661H838L690 616L588 588C580 594 562 595 554 589L553 583L460 556L443 552C432 554 421 553 420 548Z"
          fill="url(#shadow)"
          opacity=".35"
        />

        <g stroke="#0a0a0a" strokeWidth="1" strokeLinejoin="round">
          <path d="M441 196C430 192 420 210 420 230C420 243 424 250 431 250L450 251C442 238 449 216 463 214Z" fill="url(#pommel)" />
          <path d="M463 214L562 270L556 310L450 251C442 238 449 218 463 214Z" fill="url(#handle)" />
          <path d="M571 253C561 255 553 276 553 300C553 325 559 341 565 343L573 346L583 262L576 255Z" fill="#c9b25f" />
          <ellipse cx="575.5" cy="302" rx="15" ry="44.5" transform="rotate(3 575 302)" fill="#b7a154" />
          <path d="M571 253C579 253 586 262 589 274" fill="none" />
          <path d="M574 285L577 283L620 306L900 469L933 489L1066 559L1041 550Z" fill="#b09a4f" />
          <path d="M574 285L620 312L900 474L1041 550C1022 556 990 554 953 535L900 502L620 331L574 304Z" fill="url(#blade)" />
          <path d="M574 304L620 331L900 502L953 535C990 554 1022 556 1041 550L1066 559C1040 580 993 574 955 550L900 517L620 345L576 319Z" fill="url(#edge)" />
          <path d="M953 535L955 550M933 489L931 491" fill="none" />
        </g>

        <g strokeLinecap="round">
          <path d="M287 594V564" stroke="#1010c4" strokeWidth="3.5" />
          <path d="M287 557l4.5 12h-9z" fill="#1010e0" />
          <path d="M290 594l18-10" stroke="#169a20" strokeWidth="3" />
          <path d="M321 576l-9 10-4-7z" fill="#12b01d" />
          <path d="M290 599l19 9" stroke="#c41010" strokeWidth="3" />
          <path d="M321 615l-13-2 4-7z" fill="#e01010" />
          <circle cx="287" cy="596" r="5" fill="#f4ec10" stroke="#8f8a10" />
        </g>
        <g className="font-['Liberation_Sans',sans-serif] text-[15px]">
          <text x="282" y="552" fill="#1c1ccc">Z</text>
          <text x="324" y="576" fill="#22e022">Y</text>
          <text x="323" y="625" fill="#e01818">X</text>
        </g>
      </svg>
    </main>
  );
}

function PromptBar() {
  return (
    <section className="border-t-4 border-[#a3a6b0]">
      <div className="flex h-[21px] items-center border border-[#8e9199] border-b-[#b4b7bf] bg-linear-to-b from-white to-[#d8dce4] pl-1 text-[#1d3f86]">
        <Grip />
        <h2 className="ml-[6px] text-[13px] font-bold leading-4">提示条</h2>
        <div className="mr-1 ml-auto flex items-center gap-[3px] font-['Liberation_Serif',serif] font-bold text-[#2e323c]">
          <button type="button" aria-label="增大字体" className="flex text-base leading-4">A<sup className="text-[6px] leading-3">▴</sup></button>
          <button type="button" aria-label="减小字体" className="flex text-xs leading-4">A<sup className="text-[6px] leading-3">▾</sup></button>
          <IconButton name="chevrons" label="折叠" size={14} />
          <IconButton name="menu" label="选项" size={14} className="text-[#1d3f86]" />
          <IconButton name="pin" label="固定" size={14} className="text-[#1d3f86]" />
        </div>
      </div>
      <div className="h-7 bg-white" />
    </section>
  );
}

function Divider({ className }: { className?: string }) {
  return <span className={`h-full w-[2px] border-l border-[#9699a4] bg-[#e3e5ea] ${className ?? ''}`} />;
}

function StatusBar() {
  const tools = [
    ['zoomArea', '缩放区域'],
    ['magnifier', '缩放'],
    ['fitWindow', '适合'],
    ['panWindow', '平移'],
    ['rotate', '旋转'],
    ['shaded', '着色'],
    ['wireframe', '线框'],
  ];
  return (
    <div className="flex h-[23px] items-center justify-end border-t border-[#9da0aa] bg-linear-to-b from-[#d4d6de] via-[#afb2be] via-35% to-[#c9ccd4]">
      <Divider className="mr-[182px]" />
      <Divider className="mr-[26px]" />
      <Divider />
      <input aria-label="命令查找器" defaultValue="命令查找器" className="ml-px h-5 w-[126px] border border-[#7d808a] bg-white px-[2px] text-xs text-black" />
      <IconButton name="greenArrow" label="查找" size={13} className="ml-[6px] w-4" />
      <Divider className="mr-1 ml-[10px]" />
      <div className="mr-[2px] flex gap-[7px]">
        {tools.map(([name, label]) => (
          <IconButton key={name} name={name} label={label} />
        ))}
      </div>
      <div className="relative flex h-full items-center pr-1 pl-[18px]">
        <input
          type="range"
          aria-label="缩放比例"
          defaultValue={49}
          className="h-[2px] w-[120px] appearance-none border-t border-[#8b8e99] bg-white [&::-webkit-slider-thumb]:h-3 [&::-webkit-slider-thumb]:w-[9px] [&::-webkit-slider-thumb]:appearance-none [&::-webkit-slider-thumb]:rounded-b-full [&::-webkit-slider-thumb]:border [&::-webkit-slider-thumb]:border-[#3e6290] [&::-webkit-slider-thumb]:bg-[#d9e6f5]"
        />
        <button type="button" aria-label="放大" className="ml-px">
          <svg width="16" height="16" viewBox="0 0 16 16">
            <circle cx="8" cy="8" r="7" fill="#e6eef8" stroke="#4f6b94" />
            <path d="M8 4v8M4 8h8" stroke="#26406b" strokeWidth="2" />
          </svg>
        </button>
        <div role="tooltip" className="absolute top-1 left-1 z-10 border border-black bg-[#ffffe1] px-[2px] text-xs leading-4 whitespace-nowrap text-black">
          帮助
        </div>
      </div>
    </div>
  );
}

const windows = [
  { icon: 'ieGlobe', title: '『Inventor 技术交...', active: false },
  { icon: 'solidEdge', title: 'Solid Edge ST - 零件 ...', active: true },
  { icon: 'folder', title: 'F:\\SolidWorks 教程...', active: false },
  { icon: 'solidWorks', title: 'SolidWorks Professio...', active: false },
];

function Taskbar() {
  return (
    <footer className="flex h-[30px] items-center bg-linear-to-b from-[#777] via-[#2f2f2f] via-45% to-black to-50% text-white">
      <button type="button" className="ml-[7px] flex w-[92px] items-center gap-1">
        <svg width="24" height="26" viewBox="0 0 24 26" className="shrink-0">
          <path d="M1 2l4 3 3-3h8l3 3 4-3-1 11-3 2v4l-5 6h-4l-5-6v-4l-3-2z" fill="#5b5b5b" stroke="#2a2a2a" />
          <path d="M10 2h4v7h-4zM3 6l6 3M21 6l-6 3M4 10l6 3M20 10l-6 3M10 14h4v8h-4zM7 15v5M17 15v5" fill="#777" stroke="#1c1c1c" strokeWidth="1.2" />
        </svg>
        <span className="font-['DejaVu_Sans',sans-serif] text-[11px] font-bold">PROTECT</span>
      </button>
      <div className="ml-[10px] flex items-center gap-[7px]">
        <IconButton name="robot" label="机器人" />
        <IconButton name="globe" label="网络" />
        <IconButton name="ieGlobe" label="浏览器" />
        <button type="button" aria-label="更多快捷方式" className="ml-1 w-2 pb-3 text-sm leading-4">»</button>
      </div>
      <div className="ml-[10px] flex gap-[3px] text-[11px]">
        {windows.map((win) => (
          <button
            key={win.title}
            type="button"
            className={`flex h-7 w-[157px] items-center gap-1 rounded border px-2 whitespace-nowrap ${win.active ? 'border-[#6d6d6d] bg-linear-to-b from-[#3d3d3d] to-[#1a1a1a]' : 'border-[#8d8d8d] bg-linear-to-b from-[#777] via-[#333] via-48% to-[#0c0c0c] to-52%'}`}
          >
            <Icon name={win.icon} />
            <span>{win.title}</span>
          </button>
        ))}
      </div>
      <div className="mr-[14px] ml-auto flex items-center gap-[3px]">
        <IconButton name="keyboard" label="输入法" />
        <IconButton name="helpPage" label="帮助" className="ml-px size-5 bg-[#444]" />
        <div className="flex w-5 flex-col items-center">
          <Icon name="restore" size={10} />
          <Icon name="down" size={10} />
        </div>
        <button type="button" aria-label="显示隐藏图标">
          <svg width="16" height="16" viewBox="0 0 16 16">
            <circle cx="8" cy="8" r="7" fill="#4b4b4b" />
            <path d="M10 4L6 8l4 4" fill="none" stroke="#ddd" strokeWidth="1.5" />
          </svg>
        </button>
        <IconButton name="cpu" label="处理器" size={13} className="ml-px" />
        <IconButton name="network" label="网络连接" />
        <IconButton name="networkWarn" label="网络警告" />
        <time className="ml-1 text-[11px]">11:31</time>
      </div>
    </footer>
  );
}

export default function App() {
  return (
    <div className="relative flex min-h-screen flex-col overflow-hidden bg-[#ced1da] font-['Open_Sans','Noto_Sans_CJK_SC',sans-serif]">
      <TitleBar />
      <RibbonTabs />
      <button type="button" aria-label="应用程序菜单" className="absolute top-[2px] left-[3px]">
        <svg width="38" height="38" viewBox="0 0 38 38">
          <defs>
            <radialGradient id="orb" cx=".5" cy=".3" r=".7">
              <stop offset="0" stopColor="#fff" />
              <stop offset=".7" stopColor="#d3d5d9" />
              <stop offset="1" stopColor="#a5a8ae" />
            </radialGradient>
          </defs>
          <circle cx="19" cy="19" r="18" fill="url(#orb)" stroke="#8f9298" />
          <path d="M8 17l13 1-6 11z" fill="#3b86e6" />
          <path d="M20 18l11-6v11z" fill="#2a6bd0" />
          <path d="M17 29l4-11 9 7z" fill="#e9eef5" stroke="#9aa6b8" strokeWidth=".7" />
          <path d="M10 9l6 7-4-2z" fill="#555" />
        </svg>
      </button>
      <Ribbon />
      <div className="flex flex-1 pt-[3px]">
        <aside className="flex w-[217px] shrink-0 flex-col bg-linear-to-b from-[#c3c5d0] to-[#a9acbb]">
          <SelectPanel />
          <div className="flex-1" />
          <PathFinder />
        </aside>
        <Viewport />
      </div>
      <PromptBar />
      <StatusBar />
      <Taskbar />
    </div>
  );
}
